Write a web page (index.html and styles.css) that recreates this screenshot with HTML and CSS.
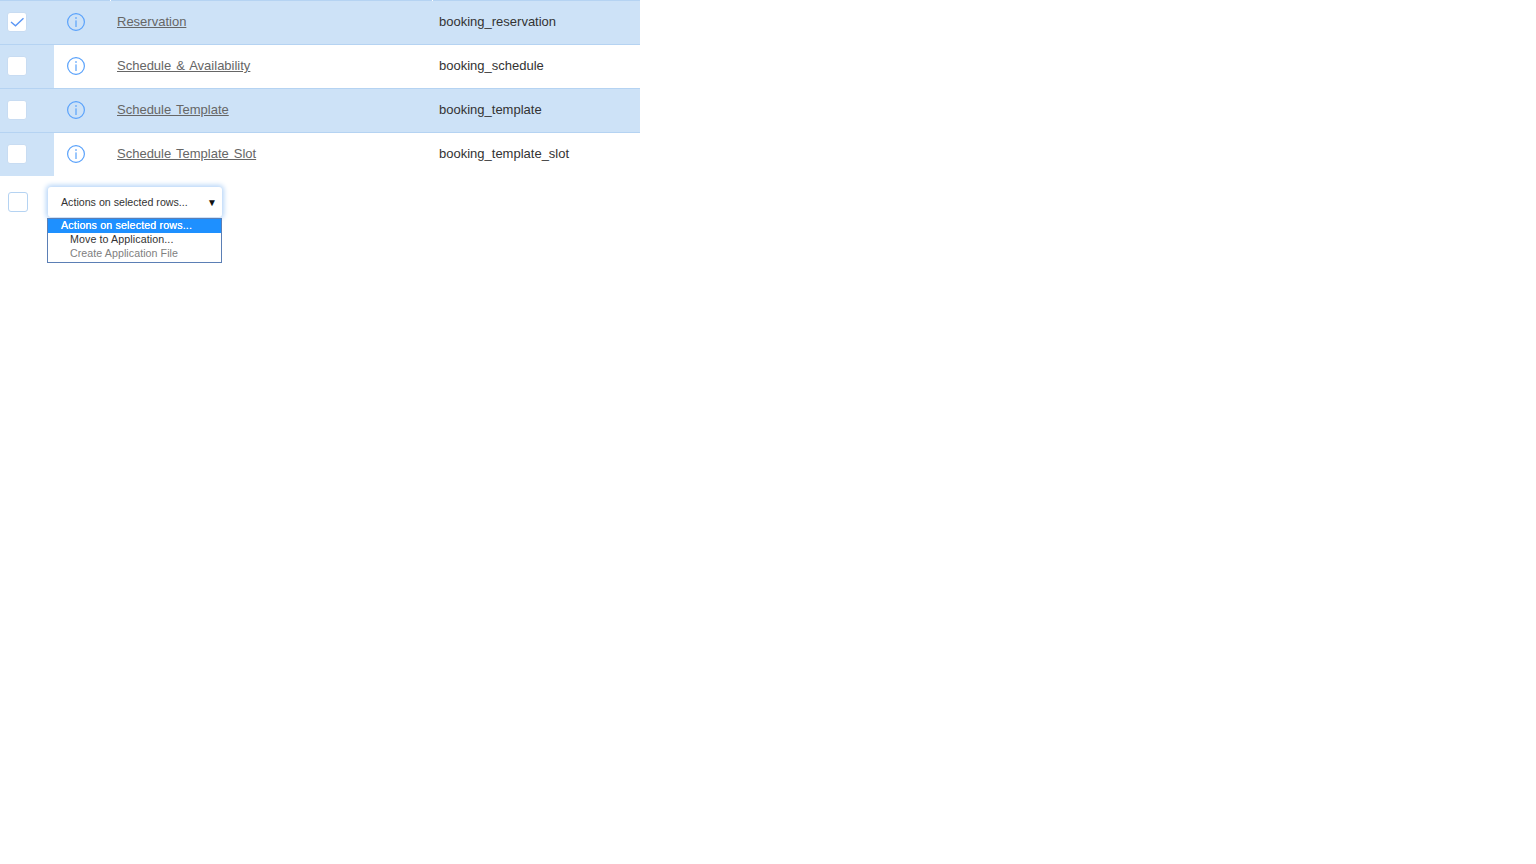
FILE: index.html
```html
<!DOCTYPE html>
<html lang="en">
<head>
<meta charset="utf-8">
<title>Tables</title>
<link rel="stylesheet" href="styles.css">
</head>
<body>
<svg class="defs" width="0" height="0" aria-hidden="true">
  <symbol id="info" viewBox="0 0 18 18">
    <circle cx="9" cy="9" r="8.4" fill="none" stroke="#5aa2fb" stroke-width="1.2"/>
    <rect x="8.4" y="7.4" width="1.2" height="6.6" fill="#5aa2fb"/>
    <rect x="8.3" y="4.2" width="1.4" height="1.6" fill="#5aa2fb"/>
  </symbol>
</svg>
<div class="table">
  <div class="row shaded first">
    <div class="cell-check"><span class="check"><svg viewBox="0 0 18 18" width="18" height="18"><path d="M3 9l4.5 3.8L15.5 5.2" fill="none" stroke="#5a96f5" stroke-width="1.4"/></svg></span></div>
    <div class="cell-info"><svg class="info" width="18" height="18"><use href="#info"/></svg></div>
    <div class="cell-name"><a href="#">Reservation</a></div>
    <div class="cell-table">booking_reservation</div>
  </div>
  <div class="row">
    <div class="cell-check"><span class="check"></span></div>
    <div class="cell-info"><svg class="info" width="18" height="18"><use href="#info"/></svg></div>
    <div class="cell-name"><a href="#">Schedule &amp; Availability</a></div>
    <div class="cell-table">booking_schedule</div>
  </div>
  <div class="row shaded">
    <div class="cell-check"><span class="check"></span></div>
    <div class="cell-info"><svg class="info" width="18" height="18"><use href="#info"/></svg></div>
    <div class="cell-name"><a href="#">Schedule Template</a></div>
    <div class="cell-table">booking_template</div>
  </div>
  <div class="row">
    <div class="cell-check"><span class="check"></span></div>
    <div class="cell-info"><svg class="info" width="18" height="18"><use href="#info"/></svg></div>
    <div class="cell-name"><a href="#">Schedule Template Slot</a></div>
    <div class="cell-table">booking_template_slot</div>
  </div>
</div>
<div class="actions">
  <span class="check check-all"></span>
  <div class="select-wrap">
    <div class="select"><span>Actions on selected rows...</span><span class="arrow">▼</span></div>
    <div class="menu">
      <div class="opt selected">Actions on selected rows...</div>
      <div class="opt child">Move to Application...</div>
      <div class="opt child disabled">Create Application File</div>
    </div>
  </div>
</div>
</body>
</html>
```
FILE: styles.css
```css
* { box-sizing: border-box; }
html, body { margin: 0; padding: 0; background: #fff; }
html { height: 100%; }
body { min-height: 100%; font-family: "Liberation Sans", Arial, sans-serif; font-size: 13px; color: #333; }
.defs { position: absolute; }
.table { width: 640px; }
.row { display: flex; height: 44px; border-top: 1px solid #b5d3f2; }
.row > div { display: flex; align-items: center; padding-bottom: 2px; }
.row.shaded { background: #cde2f7; }
.row > .cell-check { width: 54px; background: #cde2f7; padding-left: 7px; }
.row > .cell-info { width: 55px; padding-left: 13px; padding-bottom: 1px; }
.cell-name { width: 322px; padding-left: 8px; }
.cell-name a { color: #666; text-decoration: underline; word-spacing: 1.4px; }
.cell-table { flex: 1; padding-left: 8px; color: #333; }
.first { position: relative; }
.first::before, .first::after { content: ""; position: absolute; top: -1px; width: 1px; height: 1px; background: #fff; }
.first::before { left: 110px; }
.first::after { left: 432px; }
.check { display: block; width: 20px; height: 20px; background: #fff; border: 1px solid #c8dcf2; border-radius: 3px; }
.check svg { display: block; margin: 0; }
.actions { display: flex; align-items: center; padding: 11px 0 0 8px; }
.check-all { border-color: #b5d3f2; }
.select-wrap { position: relative; margin-left: 20px; width: 174px; }
.select { display: flex; justify-content: space-between; align-items: center; height: 30px; padding: 0 5px 0 13px; font-size: 10.67px; color: #333; background: #fff; border-radius: 3px; box-shadow: 0 0 5px 2px #b8d6f8; }
.arrow { font-size: 10px; color: #111; }
.menu { position: absolute; top: 31px; left: -1px; width: 175px; height: 45px; background: #fff; border: 1px solid #5b7fb5; font-size: 10.67px; line-height: 12px; letter-spacing: .1px; color: #333; }
.opt { height: 14px; padding-left: 13px; }
.opt.selected { background: #1e90ff; color: #fff; letter-spacing: .16px; text-shadow: 0 0 .5px #fff; }
.opt.child { padding-left: 22px; }
.opt.disabled { color: #808080; letter-spacing: .06px; }
```
